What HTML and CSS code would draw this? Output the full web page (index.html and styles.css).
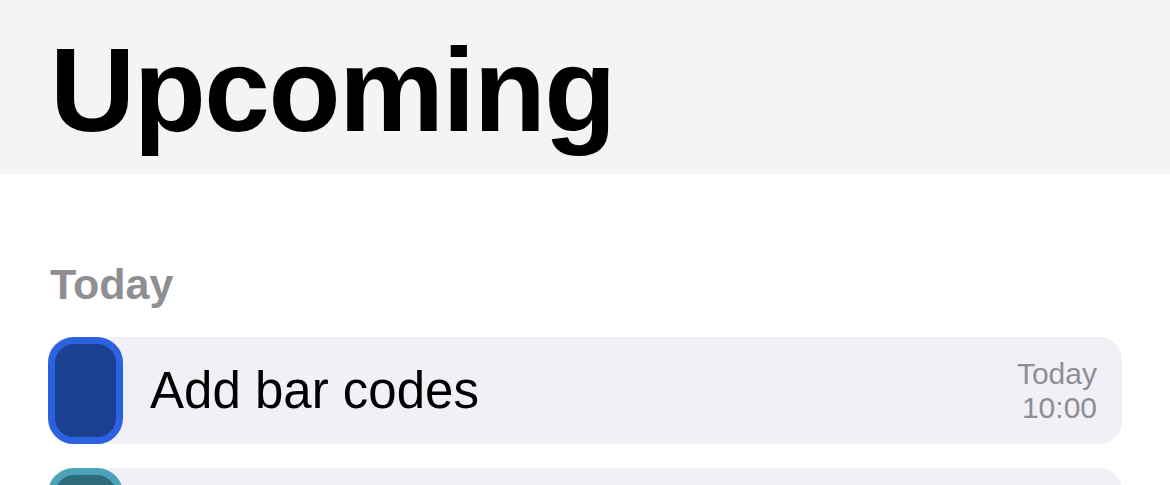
FILE: index.html
```html
<!DOCTYPE html>
<html lang="en">
<head>
  <meta charset="UTF-8">
  <meta name="viewport" content="width=device-width, initial-scale=1.0">
  <title>Upcoming</title>
  <link rel="stylesheet" href="styles.css">
</head>
<body>

  <div class="header">
    <h1>Upcoming</h1>
  </div>

  <div class="section">
    <h2>Today</h2>

    <div class="task">
      <div class="tag tag-blue"></div>
      <div class="task-title">Add bar codes</div>
      <div class="task-time">Today<br>10:00</div>
    </div>

    <div class="task">
      <div class="tag tag-teal"></div>
      <div class="task-title"></div>
      <div class="task-time"></div>
    </div>
  </div>

</body>
</html>
```
FILE: styles.css
```css
body {
  font-family: "Liberation Sans", Arial, sans-serif;
  margin: 0;
  background: #fff;
  color: #000;
}
.header {
  height: 174px;
  box-sizing: border-box;
  padding: 31px 50px 0;
  background-color: #f4f4f4;
}
h1 {
  margin: 0;
  font-size: 118px;
  line-height: 1;
  font-weight: bold;
  letter-spacing: -1.5px;
}
.section {
  padding: 0 48px 0 48px;
}
h2 {
  margin: 89px 0 0 2px;
  font-size: 43px;
  line-height: 1;
  font-weight: bold;
  color: #8e8e93;
}
.task {
  display: flex;
  align-items: center;
  height: 107px;
  margin-top: 31px;
  background-color: #f1f0f6;
  border-radius: 22px;
}
.task + .task {
  margin-top: 24px;
}
.tag {
  width: 75px;
  height: 107px;
  box-sizing: border-box;
  border: 7px solid;
  border-radius: 26px;
  flex-shrink: 0;
}
.tag-blue {
  border-color: #2c62e0;
  background-color: #1b3f91;
}
.tag-teal {
  border-color: #4aa3b9;
  background-color: #2f6c7b;
}
.task-title {
  flex: 1;
  margin-left: 27px;
  font-size: 51px;
}
.task-time {
  padding-right: 25px;
  font-size: 30px;
  line-height: 34px;
  text-align: right;
  color: #8e8e93;
}
```
